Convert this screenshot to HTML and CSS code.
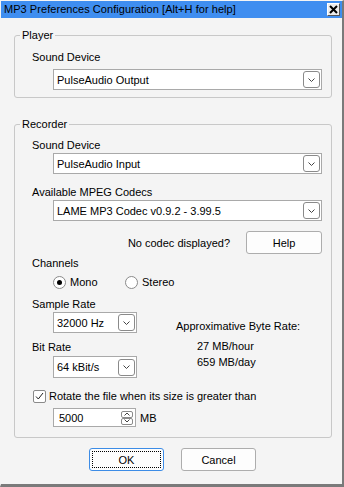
FILE: index.html
```html
<!DOCTYPE html>
<html lang="en">
<head>
  <meta charset="UTF-8">
  <meta name="viewport" content="width=device-width, initial-scale=1.0">
  <title>MP3 Preferences Configuration</title>
  <link rel="stylesheet" href="styles.css">
</head>
<body>
  <div class="window">
    <!-- title bar -->
    <div class="titlebar">
      <span class="title">MP3 Preferences Configuration [Alt+H for help]</span>
      <span class="close-btn">
        <svg width="9" height="9" viewBox="0 0 9 9"><path d="M1 1 L8 8 M8 1 L1 8" stroke="#000" stroke-width="2" fill="none"/></svg>
      </span>
    </div>

    <div class="content">
      <!-- Player -->
      <fieldset class="group player">
        <legend>Player</legend>
        <div class="rows">
          <div class="label">Sound Device</div>
          <div class="combo wide">
            <span>PulseAudio Output</span>
            <span class="combo-btn"><svg width="7" height="4" viewBox="0 0 7 4"><path d="M0.5 0.5 L3.5 3.5 L6.5 0.5" stroke="#444" fill="none"/></svg></span>
          </div>
        </div>
      </fieldset>

      <!-- Recorder -->
      <fieldset class="group recorder">
        <legend>Recorder</legend>
        <div class="rows">
          <div class="label">Sound Device</div>
          <div class="combo wide">
            <span>PulseAudio Input</span>
            <span class="combo-btn"><svg width="7" height="4" viewBox="0 0 7 4"><path d="M0.5 0.5 L3.5 3.5 L6.5 0.5" stroke="#444" fill="none"/></svg></span>
          </div>

          <div class="label codecs">Available MPEG Codecs</div>
          <div class="combo wide">
            <span>LAME MP3 Codec v0.9.2 - 3.99.5</span>
            <span class="combo-btn"><svg width="7" height="4" viewBox="0 0 7 4"><path d="M0.5 0.5 L3.5 3.5 L6.5 0.5" stroke="#444" fill="none"/></svg></span>
          </div>

          <div class="help-row">
            <span>No codec displayed?</span>
            <button class="btn help-btn">Help</button>
          </div>

          <div class="label channels">Channels</div>
          <div class="radio-row">
            <label class="radio-item"><span class="radio checked"></span>Mono</label>
            <label class="radio-item"><span class="radio"></span>Stereo</label>
          </div>

          <div class="rate-grid">
            <div class="rate-left">
              <div class="label">Sample Rate</div>
              <div class="combo small sample">
                <span>32000 Hz</span>
                <span class="combo-btn"><svg width="7" height="4" viewBox="0 0 7 4"><path d="M0.5 0.5 L3.5 3.5 L6.5 0.5" stroke="#444" fill="none"/></svg></span>
              </div>
              <div class="label bitrate">Bit Rate</div>
              <div class="combo small bit">
                <span>64 kBit/s</span>
                <span class="combo-btn"><svg width="7" height="4" viewBox="0 0 7 4"><path d="M0.5 0.5 L3.5 3.5 L6.5 0.5" stroke="#444" fill="none"/></svg></span>
              </div>
            </div>
            <div class="rate-right">
              <div class="rate-title">Approximative Byte Rate:</div>
              <div class="rate-value hour">27 MB/hour</div>
              <div class="rate-value">659 MB/day</div>
            </div>
          </div>

          <label class="check-row">
            <span class="checkbox"><svg width="9" height="8" viewBox="0 0 9 8"><path d="M1 4.5 L3.3 7 L8 1" stroke="#222" fill="none"/></svg></span>
            Rotate the file when its size is greater than
          </label>
          <div class="spin-row">
            <div class="spin">
              <span>5000</span>
              <span class="spin-btns">
                <span class="spin-btn"><svg width="6" height="4" viewBox="0 0 6 4"><path d="M0.5 3.5 L3 1 L5.5 3.5" stroke="#444" fill="none"/></svg></span>
                <span class="spin-btn"><svg width="6" height="4" viewBox="0 0 6 4"><path d="M0.5 0.5 L3 3 L5.5 0.5" stroke="#444" fill="none"/></svg></span>
              </span>
            </div>
            <span>MB</span>
          </div>
        </div>
      </fieldset>

      <div class="buttons">
        <button class="btn ok-btn">OK</button>
        <button class="btn">Cancel</button>
      </div>
    </div>
  </div>
</body>
</html>
```

FILE: styles.css
```css
* {
  margin: 0;
  padding: 0;
  box-sizing: border-box;
}
body {
  font-family: "Liberation Sans", Arial, sans-serif;
  font-size: 11px;
  color: #000;
  background-color: #f4f4f4;
}

/* window frame */
.window {
  width: 344px;
  height: 487px;
  background-color: #f4f4f4;
  border-top: 1px solid #f4f4f4;
  border-left: 1px solid #f4f4f4;
  border-right: 2px solid #7a7a7a;
  border-bottom: 3px solid #7a7a7a;
}
.titlebar {
  height: 17px;
  background-color: #3f8ef0;
  display: flex;
  align-items: center;
  justify-content: space-between;
  padding: 0 2px 0 3px;
}
.title {
  font-size: 11px;
  letter-spacing: 0.05px;
  line-height: 17px;
  color: #000;
}
.close-btn {
  width: 13px;
  height: 13px;
  display: flex;
  align-items: center;
  justify-content: center;
  background-color: #ececec;
  border: 1px solid #fff;
  border-right-color: #555;
  border-bottom-color: #555;
}

.content {
  padding: 10px 0 0 13px;
}

/* group boxes */
.group {
  width: 317px;
  border: 1px solid #c8c8c8;
  border-radius: 3px;
  padding: 0 9px 7px 5px;
}
.group legend {
  padding: 0 2px;
  line-height: 14px;
}
.rows {
  padding-left: 12px;
}
.label {
  line-height: 14px;
}
.player .label {
  margin-top: 8px;
}
.player .combo {
  margin-top: 5px;
}
.recorder {
  margin-top: 19px;
  padding-bottom: 10px;
}
.recorder .rows > .label:first-child {
  margin-top: 7px;
}
.recorder .combo {
  margin-top: 1px;
}
.label.codecs {
  margin-top: 11px;
}

/* combo boxes */
.combo {
  display: flex;
  align-items: center;
  justify-content: space-between;
  height: 21px;
  margin-left: 21px;
  padding: 0 1px 0 3px;
  background-color: #fff;
  border: 1px solid #a9a9a9;
}
.combo.wide {
  width: 269px;
}
.combo.small {
  width: 84px;
}
.combo-btn {
  width: 17px;
  height: 17px;
  display: flex;
  align-items: center;
  justify-content: center;
  border: 1px solid #8a8a8a;
  border-radius: 3px;
  background-color: #fff;
}

/* buttons */
.btn {
  height: 23px;
  width: 75px;
  font-family: inherit;
  font-size: 11px;
  color: #000;
  background-color: #fdfdfd;
  border: 1px solid #adadad;
  border-radius: 3px;
}
.help-row {
  display: flex;
  align-items: center;
  justify-content: flex-end;
  gap: 16px;
  width: 290px;
  margin-top: 10px;
}
.help-btn {
  width: 76px;
}
.label.channels {
  margin-top: 2px;
}

/* radios */
.radio-row {
  display: flex;
  margin-top: 5px;
  margin-left: 21px;
  line-height: 14px;
}
.radio-item {
  display: flex;
  align-items: center;
  gap: 4px;
  width: 72px;
}
.radio {
  width: 13px;
  height: 13px;
  border: 1px solid #8a8a8a;
  border-radius: 50%;
  background-color: #fff;
  display: flex;
  align-items: center;
  justify-content: center;
}
.radio.checked::after {
  content: "";
  width: 5px;
  height: 5px;
  border-radius: 50%;
  background-color: #000;
}

/* sample rate / bit rate */
.rate-grid {
  display: flex;
  margin-top: 8px;
}
.rate-left {
  width: 144px;
}
.sample {
  margin-top: 3px;
}
.label.bitrate {
  margin-top: 7px;
}
.recorder .combo.bit {
  margin-top: 2px;
  height: 22px;
}
.rate-right {
  padding-top: 22px;
  line-height: 14px;
}
.rate-value {
  padding-left: 21px;
  margin-top: 2px;
}
.rate-value.hour {
  margin-top: 6px;
}

/* rotate option */
.check-row {
  display: flex;
  align-items: center;
  gap: 3px;
  margin-top: 11px;
  margin-left: 1px;
  line-height: 14px;
}
.checkbox {
  width: 13px;
  height: 13px;
  border: 1px solid #8a8a8a;
  border-radius: 2px;
  background-color: #fff;
  display: flex;
  align-items: center;
  justify-content: center;
}
.spin-row {
  display: flex;
  align-items: center;
  gap: 4px;
  margin-top: 5px;
  margin-left: 21px;
}
.spin {
  width: 83px;
  height: 19px;
  display: flex;
  align-items: center;
  justify-content: space-between;
  padding: 0 2px 0 5px;
  background-color: #fff;
  border: 1px solid #a9a9a9;
}
.spin-btns {
  display: flex;
  flex-direction: column;
}
.spin-btn {
  width: 12px;
  height: 7px;
  display: flex;
  align-items: center;
  justify-content: center;
  border: 1px solid #8a8a8a;
  border-radius: 2px;
  background-color: #fff;
}

.buttons {
  width: 317px;
  display: flex;
  justify-content: center;
  gap: 17px;
  margin-top: 10px;
}
.ok-btn {
  border-color: #3c8ce6;
  outline: 1px dotted #000;
  outline-offset: -4px;
}
```
